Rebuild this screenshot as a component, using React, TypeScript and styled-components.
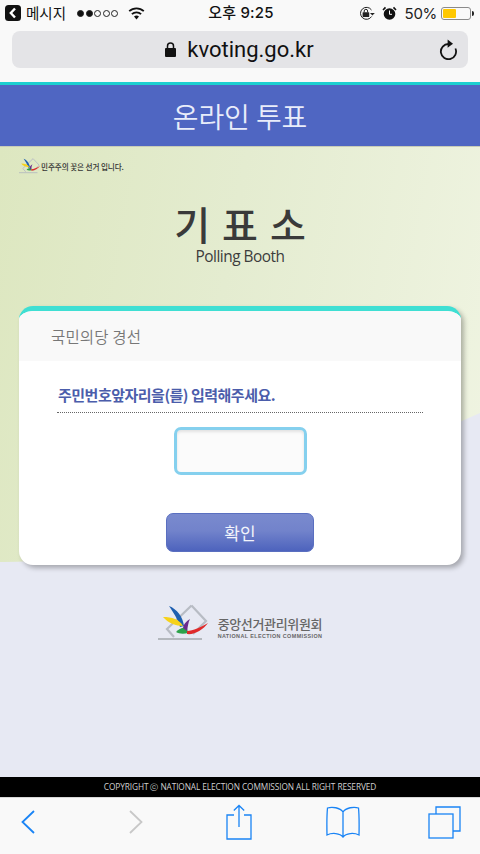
import React from "react";
import styled, { createGlobalStyle } from "styled-components";

const KR = `"Noto Sans CJK KR", "Noto Sans", sans-serif`;

const Global = createGlobalStyle`
  html, body { margin: 0; padding: 0; background: #f9f9f9; }
  * { box-sizing: border-box; }
`;

const Page = styled.div`
  width: 480px;
  height: 854px;
  display: flex;
  flex-direction: column;
  overflow: hidden;
  font-family: ${KR};
  background: #f9f9f9;
`;

const StatusBar = styled.div`
  height: 28px;
  padding: 0 9px 2px 5px;
  display: grid;
  grid-template-columns: 1fr auto 1fr;
  align-items: center;
  color: #111;
`;

const StatusGroup = styled.div<{ $end?: boolean }>`
  display: flex;
  align-items: center;
  justify-content: ${(p) => (p.$end ? "flex-end" : "flex-start")};
`;

const StatusText = styled.span`
  font-size: 14.5px;
  line-height: 20px;
  white-space: nowrap;
`;

const Clock = styled.span`
  font-size: 15px;
  line-height: 20px;
  font-weight: 500;
  font-family: Inter, ${KR};
  letter-spacing: 0.2px;
  white-space: nowrap;
  position: relative;
  left: 3px;
`;

const BatteryText = styled.span`
  font-family: Inter, sans-serif;
  font-size: 15px;
  letter-spacing: -0.3px;
  margin: 0 4px 0 8px;
  color: #222;
`;

const Signal = styled.div`
  display: flex;
  gap: 1.5px;
  margin: 0 10px 0 11px;
`;

const Dot = styled.i<{ $on: boolean }>`
  width: 7px;
  height: 7px;
  border-radius: 50%;
  border: 1px solid #222;
  background: ${(p) => (p.$on ? "#111" : "transparent")};
`;

const Battery = styled.div`
  width: 30px;
  height: 13px;
  border: 1px solid #8a8a8a;
  border-radius: 3px;
  padding: 1px;
  position: relative;
  &::after {
    content: "";
    position: absolute;
    right: -4px;
    top: 3px;
    width: 2px;
    height: 5px;
    background: #222;
    border-radius: 0 2px 2px 0;
  }
`;

const BatteryFill = styled.div`
  width: 50%;
  height: 100%;
  background: #ffc800;
  border-radius: 1px;
`;

const UrlArea = styled.div`
  padding: 3px 12px 14px;
`;

const UrlBar = styled.div`
  height: 37px;
  background: #e4e4e7;
  border-radius: 8px;
  position: relative;
  display: flex;
  align-items: center;
  justify-content: center;
  gap: 11px;
  padding-right: 1px;
`;

const UrlText = styled.span`
  font-family: Roboto, sans-serif;
  font-size: 22px;
  color: #111;
  line-height: 28px;
`;

const Reload = styled.svg`
  position: absolute;
  right: 10px;
  top: 8px;
`;

const Header = styled.header`
  height: 65px;
  flex: none;
  border-top: 3px solid #1ccfd0;
  border-bottom: 1px solid #c8ccb8;
  background: #4f66c2;
  display: flex;
  align-items: center;
  justify-content: center;
  color: #e9edfa;
  font-size: 28px;
  font-weight: 350;
  letter-spacing: -0.1px;
`;

const Stage = styled.main`
  flex: 1;
  min-height: 0;
  position: relative;
  padding: 9px 19px 0;
  background: linear-gradient(100deg, #dde7c0 0%, #e4ecd0 42%, #f1f5e4 100%);
  &::before {
    content: "";
    position: absolute;
    inset: 0;
    background: #e7e9f3;
    clip-path: path("M0 415 C 130 416, 270 360, 480 266 L480 630 L0 630 Z");
  }
`;

const StageContent = styled.div`
  position: relative;
  display: flex;
  flex-direction: column;
`;

const Slogan = styled.div`
  height: 20px;
  display: flex;
  align-items: center;
  gap: 1px;
  font-size: 7.6px;
  font-weight: 500;
  color: #333;
  letter-spacing: -0.1px;
`;

const Title = styled.h1`
  margin: 25px 0 0;
  height: 44px;
  line-height: 44px;
  text-align: center;
  font-size: 39px;
  font-weight: 500;
  color: #3a3a3a;
  letter-spacing: 12px;
  text-indent: 12px;
`;

const Subtitle = styled.div`
  margin-top: 1px;
  height: 22px;
  line-height: 22px;
  text-align: center;
  font-family: "Open Sans", sans-serif;
  font-size: 15.4px;
  letter-spacing: -0.5px;
  color: #3c3c3c;
`;

const Card = styled.section`
  margin-top: 38px;
  height: 259px;
  background: #fff;
  border-top: 5px solid #3fdfd3;
  border-radius: 14px;
  box-shadow: 3px 3px 5px rgba(0, 0, 0, 0.28);
  overflow: hidden;
  display: flex;
  flex-direction: column;
`;

const CardHead = styled.div`
  height: 50px;
  flex: none;
  background: #f9f9f9;
  padding-left: 32px;
  display: flex;
  align-items: center;
  font-size: 15.5px;
  font-weight: 350;
  color: #777;
  letter-spacing: 0.15px;
`;

const CardBody = styled.div`
  flex: 1;
  display: flex;
  flex-direction: column;
  align-items: center;
  padding: 22px 38px 0;
`;

const Prompt = styled.div`
  align-self: stretch;
  height: 30px;
  padding-left: 1px;
  border-bottom: 1px dotted #666;
  font-size: 15px;
  line-height: 24px;
  font-weight: 700;
  color: #4b5dab;
  letter-spacing: -0.5px;
`;

const CodeInput = styled.input`
  display: block;
  margin-top: 14px;
  width: 133px;
  height: 48px;
  border: 3px solid #85d0ee;
  border-radius: 7px;
  background: #fbfbfb;
  box-shadow: inset 0 2px 3px rgba(0, 0, 0, 0.1);
  outline: none;
`;

const Confirm = styled.button`
  margin-top: 38px;
  width: 148px;
  height: 39px;
  border: 1px solid #5a6fc0;
  border-radius: 7px;
  background: linear-gradient(#7a8ace 0%, #7283cb 45%, #4d63bd 100%);
  color: #f2f4fb;
  font-family: ${KR};
  font-size: 17px;
  font-weight: 400;
  padding: 0;
`;

const Agency = styled.div`
  margin-top: 39px;
  display: flex;
  justify-content: center;
  align-items: center;
  gap: 10px;
`;

const AgencyText = styled.div`
  display: flex;
  flex-direction: column;
  padding-top: 10px;
  color: #666;
`;

const AgencyKo = styled.div`
  font-size: 13px;
  line-height: 14px;
  font-weight: 500;
  letter-spacing: -0.35px;
  white-space: nowrap;
`;

const AgencyEn = styled.div`
  margin-top: 1px;
  font-family: "Liberation Sans", sans-serif;
  font-size: 5.4px;
  line-height: 8px;
  font-weight: 700;
  letter-spacing: 0.42px;
  white-space: nowrap;
`;

const Copyright = styled.footer`
  height: 20px;
  flex: none;
  background: #000;
  color: #d0d0d0;
  display: flex;
  align-items: center;
  justify-content: center;
  font-family: "Open Sans", sans-serif;
  font-size: 8.3px;
  letter-spacing: -0.1px;
  white-space: nowrap;
`;

const Toolbar = styled.nav`
  height: 57px;
  flex: none;
  background: #f9f9f9;
  border-top: 1px solid #d8d8d8;
  display: grid;
  grid-template-columns: 55px 161px 46px 161px 42px;
  align-items: center;
  justify-items: center;
  padding-bottom: 8px;
`;

const Bird = ({ size }: { size: number }) => (
  <svg width={size} height={size * 0.76} viewBox="0 0 50 38">
    <path d="M33.5 1.5 L48 17 L35 30 M33.5 1.5 L9 25 L16 33" fill="none" stroke="#b8bcc4" strokeWidth="2.2" />
    <path d="M0 35 H44" stroke="#b4b8be" strokeWidth="2" />
    <path d="M11 2 C19 5 25 13 26 22 L22 23 C20 15 15 8 11 2Z" fill="#1e5fb0" />
    <path d="M5 13 C14 13 21 15 25 22 C18 22 10 19 5 13Z" fill="#f6d21a" />
    <path d="M18 28 C21 25 24 23 29 24 L30 29 C26 30 21 30 18 28Z" fill="#2ca24a" />
    <path d="M25 24 C26 19 29 17 32 15 C30 19 30 22 29 27Z" fill="#6a2a8c" />
    <path d="M29 27 C35 27 43 23 50 19 C45 26 36 31 29 30Z" fill="#e02a2a" />
  </svg>
);

export default function App() {
  return (
    <Page>
      <Global />
      <StatusBar>
        <StatusGroup>
          <svg width="16" height="16" viewBox="0 0 16 16" style={{ marginRight: 5 }}>
            <rect width="16" height="16" rx="3.5" fill="#111" />
            <path d="M10 3.5 L5.8 8 L10 12.5" fill="none" stroke="#fff" strokeWidth="2.4" />
          </svg>
          <StatusText>메시지</StatusText>
          <Signal>
            {[true, true, false, false, false].map((on, i) => (
              <Dot key={i} $on={on} />
            ))}
          </Signal>
          <svg width="17" height="13" viewBox="0 0 17 13">
            <path d="M8.5 12.5 L6 9.6 A3.8 3.8 0 0 1 11 9.6Z" fill="#111" />
            <path d="M3.9 7.2 A6.6 6.6 0 0 1 13.1 7.2" fill="none" stroke="#111" strokeWidth="1.8" />
            <path d="M1.2 4.2 A10.6 10.6 0 0 1 15.8 4.2" fill="none" stroke="#111" strokeWidth="1.8" />
          </svg>
        </StatusGroup>
        <Clock>오후 9:25</Clock>
        <StatusGroup $end>
          <svg width="16" height="15" viewBox="0 0 16 15">
            <path d="M12.5 4 A6 6 0 1 0 12.6 10.5" fill="none" stroke="#222" strokeWidth="1" />
            <path d="M11 7 L15.8 7 L13.4 9.4Z" fill="#222" />
            <rect x="3.6" y="6.2" width="6.6" height="4.8" rx="0.6" fill="#222" />
            <path d="M5.2 6.4 V5 A1.7 1.7 0 0 1 8.6 5 V6.4" fill="none" stroke="#222" strokeWidth="1" />
          </svg>
          <svg width="15" height="15" viewBox="0 0 15 15" style={{ marginLeft: 7 }}>
            <circle cx="7.5" cy="8" r="5.8" fill="#111" />
            <path d="M7.5 4.5 V8.3 H10" fill="none" stroke="#fff" strokeWidth="1" />
            <path d="M1 4 L3.5 1.4 M14 4 L11.5 1.4" stroke="#111" strokeWidth="1.6" />
          </svg>
          <BatteryText>50%</BatteryText>
          <Battery>
            <BatteryFill />
          </Battery>
        </StatusGroup>
      </StatusBar>

      <UrlArea>
        <UrlBar>
          <svg width="11" height="15" viewBox="0 0 11 15">
            <rect x="0" y="6" width="11" height="9" rx="1" fill="#111" />
            <path d="M2.5 6.5 V4 A3 3 0 0 1 8.5 4 V6.5" fill="none" stroke="#111" strokeWidth="1.5" />
          </svg>
          <UrlText>kvoting.go.kr</UrlText>
          <Reload width="19" height="21" viewBox="0 0 19 21">
            <path d="M16.4 9.5 A7.6 7.6 0 1 1 9.5 5" fill="none" stroke="#111" strokeWidth="1.8" />
            <path d="M8.6 0.6 L14 4.8 L8.6 8.8Z" fill="#111" />
          </Reload>
        </UrlBar>
      </UrlArea>

      <Header>온라인 투표</Header>

      <Stage>
        <StageContent>
          <Slogan>
            <Bird size={21} />
            <span>민주주의 꽃은 선거 입니다.</span>
          </Slogan>
          <Title>기표소</Title>
          <Subtitle>Polling Booth</Subtitle>
          <Card>
            <CardHead>국민의당 경선</CardHead>
            <CardBody>
              <Prompt>주민번호앞자리을(를) 입력해주세요.</Prompt>
              <CodeInput aria-label="주민번호앞자리" />
              <Confirm>확인</Confirm>
            </CardBody>
          </Card>
          <Agency>
            <Bird size={50} />
            <AgencyText>
              <AgencyKo>중앙선거관리위원회</AgencyKo>
              <AgencyEn>NATIONAL ELECTION COMMISSION</AgencyEn>
            </AgencyText>
          </Agency>
        </StageContent>
      </Stage>

      <Copyright>COPYRIGHT ⓒ NATIONAL ELECTION COMMISSION ALL RIGHT RESERVED</Copyright>

      <Toolbar>
        <svg width="16" height="26" viewBox="0 0 16 26">
          <path d="M14 2 L2.5 13 L14 24" fill="none" stroke="#1a84f5" strokeWidth="1.8" />
        </svg>
        <svg width="16" height="26" viewBox="0 0 16 26">
          <path d="M2 2 L13.5 13 L2 24" fill="none" stroke="#c8c8c8" strokeWidth="1.8" />
        </svg>
        <svg width="26" height="36" viewBox="0 0 26 36">
          <path d="M8 11 H1 V35 H25 V11 H18" fill="none" stroke="#1a84f5" strokeWidth="1.3" />
          <path d="M13 1.5 V23 M7.8 6.5 L13 1.5 L18.2 6.5" fill="none" stroke="#1a84f5" strokeWidth="1.3" />
        </svg>
        <svg width="34" height="32" viewBox="0 0 34 32">
          <path d="M17 6 C14 1.5 6 0.5 1.5 2 C0.8 9 0.8 20 1 29 C6 26.5 14 27 17 31 C20 27 28 26.5 33 29 C33.2 20 33.2 9 32.5 2 C28 0.5 20 1.5 17 6 V31" fill="none" stroke="#1a84f5" strokeWidth="1.3" />
        </svg>
        <svg width="33" height="33" viewBox="0 0 33 33">
          <path d="M8 8 V1 H32 V25 H25" fill="none" stroke="#1a84f5" strokeWidth="1.3" />
          <rect x="1" y="8" width="24" height="24" fill="none" stroke="#1a84f5" strokeWidth="1.3" />
        </svg>
      </Toolbar>
    </Page>
  );
}
